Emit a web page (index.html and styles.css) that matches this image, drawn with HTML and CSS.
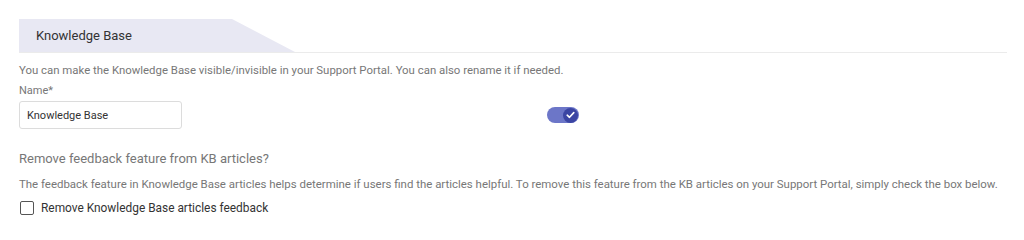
FILE: index.html
```
<!DOCTYPE html>
<html>
<head>
<meta charset="utf-8">
<link rel="stylesheet" href="styles.css">
</head>
<body>
<div class="page">
  <div class="tabbar">
    <div class="tab">Knowledge Base</div>
  </div>
  <p class="desc first">You can make the Knowledge Base visible/invisible in your Support Portal. You can also rename it if needed.</p>
  <div class="label">Name*</div>
  <div class="namerow">
    <input class="input" type="text" value="Knowledge Base">
    <div class="toggle">
      <span class="knob">
        <svg width="9" height="8" viewBox="0 0 9 8"><path d="M1.2 4.2 L3.5 6.3 L7.8 1.6" fill="none" stroke="#fff" stroke-width="1.6" stroke-linecap="round" stroke-linejoin="round"/></svg>
      </span>
    </div>
  </div>
  <h3 class="subhead">Remove feedback feature from KB articles?</h3>
  <p class="desc second">The feedback feature in Knowledge Base articles helps determine if users find the articles helpful. To remove this feature from the KB articles on your Support Portal, simply check the box below.</p>
  <label class="check">
    <span class="box"></span>
    <span class="checktext">Remove Knowledge Base articles feedback</span>
  </label>
</div>
</body>
</html>
```
FILE: styles.css
```
* { box-sizing: border-box; }
html, body { margin: 0; padding: 0; background: #fff; }
body { font-family: Roboto, "Noto Sans", Arial, sans-serif; color: #333; }
.page { padding: 19px 17px 0 19px; width: 1024px; }
.tabbar {
  height: 34px;
  border-bottom: 1px solid #ebebeb;
}
.tab {
  width: 276px;
  height: 33px;
  background: #e8e8f3;
  clip-path: polygon(0 0, 213px 0, 276px 100%, 0 100%);
  padding-left: 17px;
  font-size: 13px;
  line-height: 33px;
  color: #333;
}
.desc {
  margin: 0;
  font-size: 11.4px;
  color: #777;
  line-height: 14px;
}
.desc.first { margin-top: 10px; }
.label {
  margin-top: 7px;
  font-size: 11px;
  color: #777;
  line-height: 14px;
}
.namerow {
  display: flex;
  align-items: center;
  margin-top: 3px;
}
.input {
  width: 163px;
  height: 28px;
  border: 1px solid #dcdcdc;
  border-radius: 3px;
  padding: 0 7px;
  font-family: inherit;
  font-size: 11px;
  color: #333;
  outline: none;
}
.toggle {
  margin-left: 365px;
  width: 32px;
  height: 16px;
  border-radius: 8px;
  background: #6c76c8;
  display: flex;
  justify-content: flex-end;
  align-items: center;
  padding-right: 1px;
}
.knob {
  width: 15px;
  height: 15px;
  border-radius: 50%;
  background: #3b45a3;
  display: flex;
  align-items: center;
  justify-content: center;
}
.knob svg { display: block; }
.subhead {
  margin: 22px 0 0;
  font-weight: 400;
  font-size: 13px;
  color: #777;
  line-height: 16px;
}
.desc.second { margin-top: 10px; font-size: 11.45px; }
.check {
  display: flex;
  align-items: center;
  margin-top: 10px;
}
.box {
  width: 14px;
  height: 14px;
  border: 1.5px solid #555;
  border-radius: 2px;
  margin-left: 1px;
}
.checktext {
  margin-left: 7px;
  font-size: 11.9px;
  color: #333;
}
```
